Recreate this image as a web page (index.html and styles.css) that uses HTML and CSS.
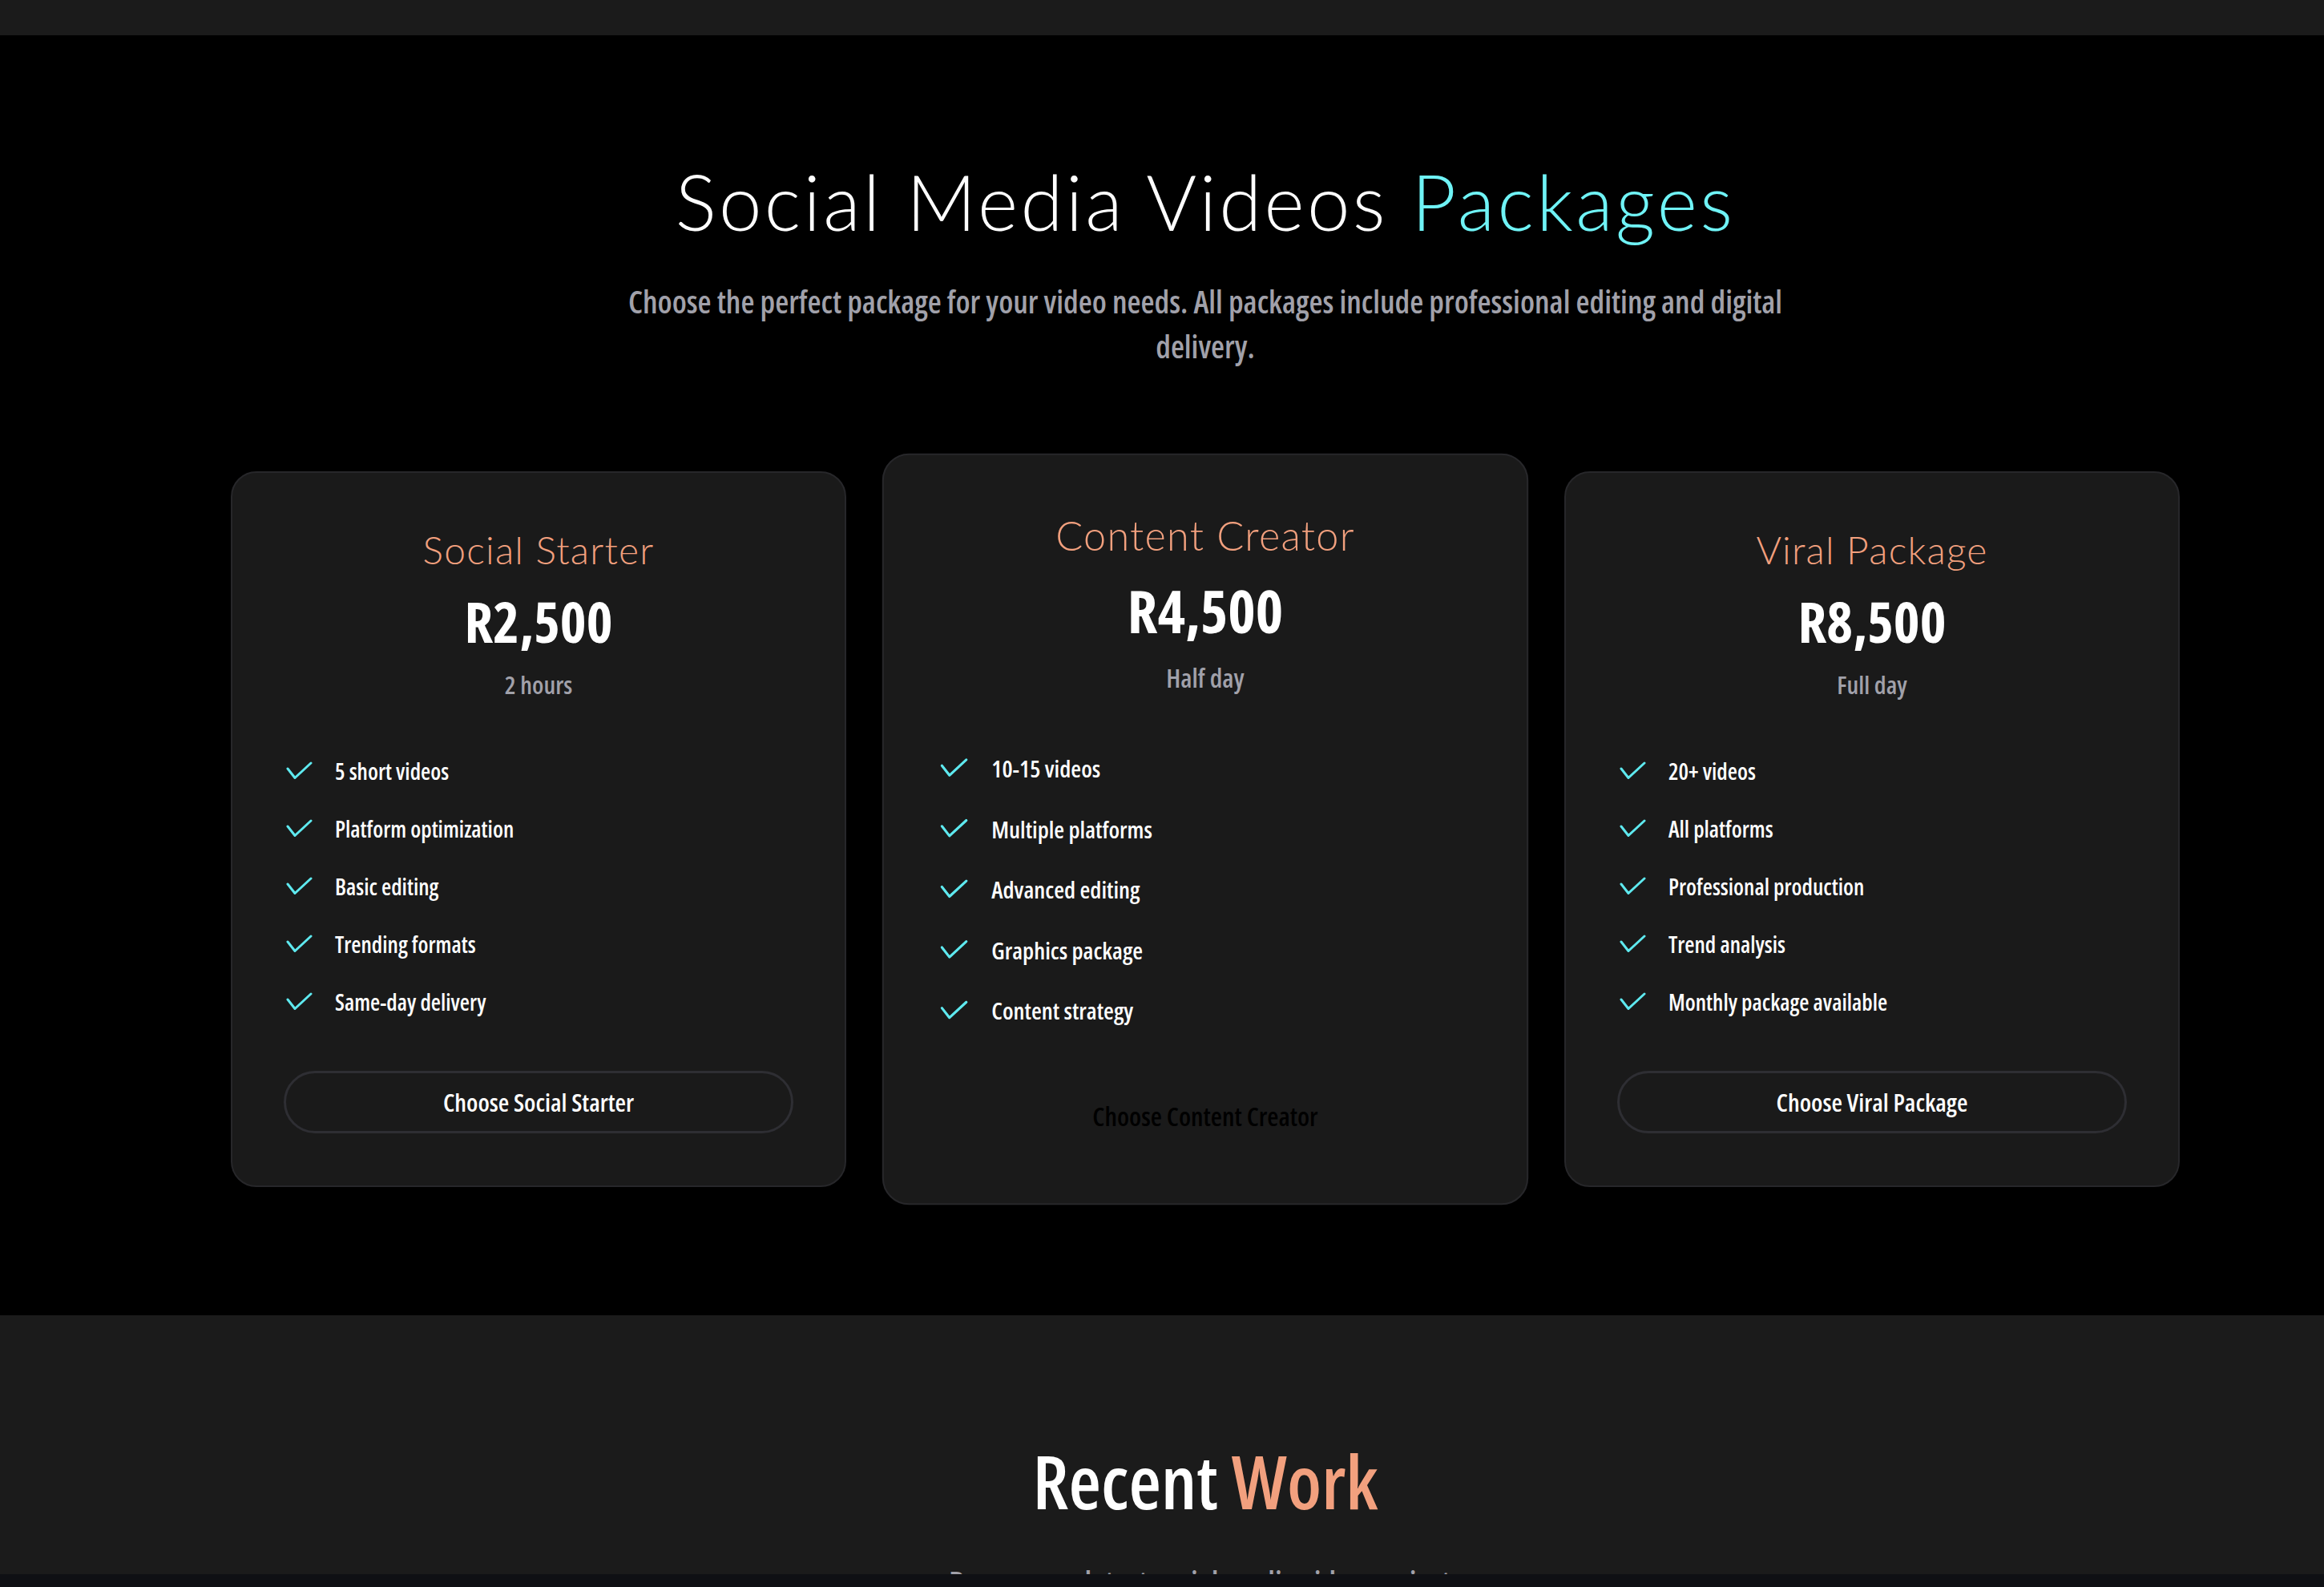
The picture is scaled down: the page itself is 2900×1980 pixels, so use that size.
FILE: index.html
```html
<!DOCTYPE html>
<html lang="en">
<head>
<meta charset="utf-8">
<title>Social Media Videos Packages</title>
<link rel="stylesheet" href="styles.css">
</head>
<body>
<div class="topbar"></div>

<section class="packages">
  <div class="wrap">
    <header class="intro">
      <h2 class="headline">Social Media Videos <span class="accent-cyan">Packages</span></h2>
      <p class="lede">Choose the perfect package for your video needs. All packages include professional editing and digital delivery.</p>
    </header>

    <div class="plans">
      <article class="plan">
        <h3 class="plan-name">Social Starter</h3>
        <div class="plan-price">R2,500</div>
        <div class="plan-duration">2 hours</div>
        <ul class="plan-features">
          <li class="feature"><svg class="check" viewBox="0 0 38 24" width="38" height="24"><polyline points="5,9 14,20.5 34,2"/></svg><span>5 short videos</span></li>
          <li class="feature"><svg class="check" viewBox="0 0 38 24" width="38" height="24"><polyline points="5,9 14,20.5 34,2"/></svg><span>Platform optimization</span></li>
          <li class="feature"><svg class="check" viewBox="0 0 38 24" width="38" height="24"><polyline points="5,9 14,20.5 34,2"/></svg><span>Basic editing</span></li>
          <li class="feature"><svg class="check" viewBox="0 0 38 24" width="38" height="24"><polyline points="5,9 14,20.5 34,2"/></svg><span>Trending formats</span></li>
          <li class="feature"><svg class="check" viewBox="0 0 38 24" width="38" height="24"><polyline points="5,9 14,20.5 34,2"/></svg><span>Same-day delivery</span></li>
        </ul>
        <button class="plan-btn" type="button">Choose Social Starter</button>
      </article>

      <article class="plan plan--featured">
        <h3 class="plan-name">Content Creator</h3>
        <div class="plan-price">R4,500</div>
        <div class="plan-duration">Half day</div>
        <ul class="plan-features">
          <li class="feature"><svg class="check" viewBox="0 0 38 24" width="38" height="24"><polyline points="5,9 14,20.5 34,2"/></svg><span>10-15 videos</span></li>
          <li class="feature"><svg class="check" viewBox="0 0 38 24" width="38" height="24"><polyline points="5,9 14,20.5 34,2"/></svg><span>Multiple platforms</span></li>
          <li class="feature"><svg class="check" viewBox="0 0 38 24" width="38" height="24"><polyline points="5,9 14,20.5 34,2"/></svg><span>Advanced editing</span></li>
          <li class="feature"><svg class="check" viewBox="0 0 38 24" width="38" height="24"><polyline points="5,9 14,20.5 34,2"/></svg><span>Graphics package</span></li>
          <li class="feature"><svg class="check" viewBox="0 0 38 24" width="38" height="24"><polyline points="5,9 14,20.5 34,2"/></svg><span>Content strategy</span></li>
        </ul>
        <button class="plan-btn plan-btn--primary" type="button">Choose Content Creator</button>
      </article>

      <article class="plan">
        <h3 class="plan-name">Viral Package</h3>
        <div class="plan-price">R8,500</div>
        <div class="plan-duration">Full day</div>
        <ul class="plan-features">
          <li class="feature"><svg class="check" viewBox="0 0 38 24" width="38" height="24"><polyline points="5,9 14,20.5 34,2"/></svg><span>20+ videos</span></li>
          <li class="feature"><svg class="check" viewBox="0 0 38 24" width="38" height="24"><polyline points="5,9 14,20.5 34,2"/></svg><span>All platforms</span></li>
          <li class="feature"><svg class="check" viewBox="0 0 38 24" width="38" height="24"><polyline points="5,9 14,20.5 34,2"/></svg><span>Professional production</span></li>
          <li class="feature"><svg class="check" viewBox="0 0 38 24" width="38" height="24"><polyline points="5,9 14,20.5 34,2"/></svg><span>Trend analysis</span></li>
          <li class="feature"><svg class="check" viewBox="0 0 38 24" width="38" height="24"><polyline points="5,9 14,20.5 34,2"/></svg><span>Monthly package available</span></li>
        </ul>
        <button class="plan-btn" type="button">Choose Viral Package</button>
      </article>
    </div>
  </div>
</section>

<section class="work">
  <div class="wrap">
    <h2 class="work-title">Recent <span class="accent-coral">Work</span></h2>
    <p class="lede work-lede">Browse our latest social media video projects</p>
  </div>
</section>

<div class="hscroll"></div>
</body>
</html>
```

FILE: styles.css
```css
* {
  box-sizing: border-box;
  margin: 0;
  padding: 0;
}

html, body {
  background: #000;
}

body {
  color: #fff;
  font-family: "Open Sans", "Liberation Sans", sans-serif;
  font-stretch: 75%;
  font-weight: 600;
  overflow: hidden;
  height: 1980px;
}

.topbar {
  height: 44px;
  background: #1b1b1b;
}

.packages {
  background: #000;
  padding: 149px 0 160px 108px;
}

.wrap {
  max-width: 2432px;
  margin: 0 auto;
}

.intro {
  text-align: center;
  margin-bottom: 128px;
}

.headline {
  font-family: "Lato", "Open Sans", sans-serif;
  font-stretch: normal;
  font-weight: 300;
  font-size: 96px;
  line-height: 1.2;
  letter-spacing: 0.035em;
  color: #fff;
}

.accent-cyan {
  color: #6ff3f6;
}

.accent-coral {
  color: #f2a07e;
}

.lede {
  font-size: 39px;
  line-height: 56px;
  color: #a1a1aa;
  max-width: 1480px;
  margin: 40px auto 0;
}

.plans {
  display: grid;
  grid-template-columns: repeat(3, 1fr);
  gap: 64px;
}

.plan {
  background: #1a1a1a;
  border: 2px solid #27272a;
  border-radius: 32px;
  padding: 64px 64px 65px;
  display: flex;
  flex-direction: column;
  text-align: center;
}

.plan--featured {
  transform: scale(1.05);
}

.plan-name {
  font-family: "Lato", "Open Sans", sans-serif;
  font-stretch: normal;
  font-weight: 300;
  font-size: 48px;
  line-height: 1.2;
  letter-spacing: 0.025em;
  color: #f2a07e;
  margin-top: 3px;
}

.plan-price {
  font-weight: 700;
  font-size: 70px;
  line-height: 84px;
  margin-top: 18px;
}

.plan-duration {
  font-size: 31px;
  line-height: 48px;
  color: #a1a1aa;
  margin-top: 13px;
}

.plan-features {
  list-style: none;
  display: flex;
  flex-direction: column;
  gap: 31.5px;
  margin-top: 64px;
  text-align: left;
}

.feature {
  display: flex;
  align-items: center;
  gap: 26px;
  font-size: 28px;
  line-height: 40.5px;
}

.check {
  flex: none;
  fill: none;
  stroke: #5ee9ef;
  stroke-width: 3;
  stroke-linecap: round;
  stroke-linejoin: round;
}

.plan-btn {
  margin-top: 66px;
  border: 3px solid #2e2e33;
  border-radius: 999px;
  background: transparent;
  color: #fff;
  font-family: inherit;
  font-stretch: 75%;
  font-size: 31px;
  font-weight: 600;
  line-height: 45px;
  padding: 13.5px;
}

.plan-btn--primary {
  border-color: transparent;
  color: #000;
}

.work {
  background: #1b1b1b;
  padding: 151px 0 0 108px;
  text-align: center;
  height: 400px;
}

.work-title {
  font-weight: 600;
  font-size: 93px;
  line-height: 1.2;
}

.work-lede {
  margin-top: 42px;
}

.hscroll {
  position: fixed;
  left: 0;
  right: 0;
  bottom: 0;
  height: 16px;
  background: #0f1014;
}
```
